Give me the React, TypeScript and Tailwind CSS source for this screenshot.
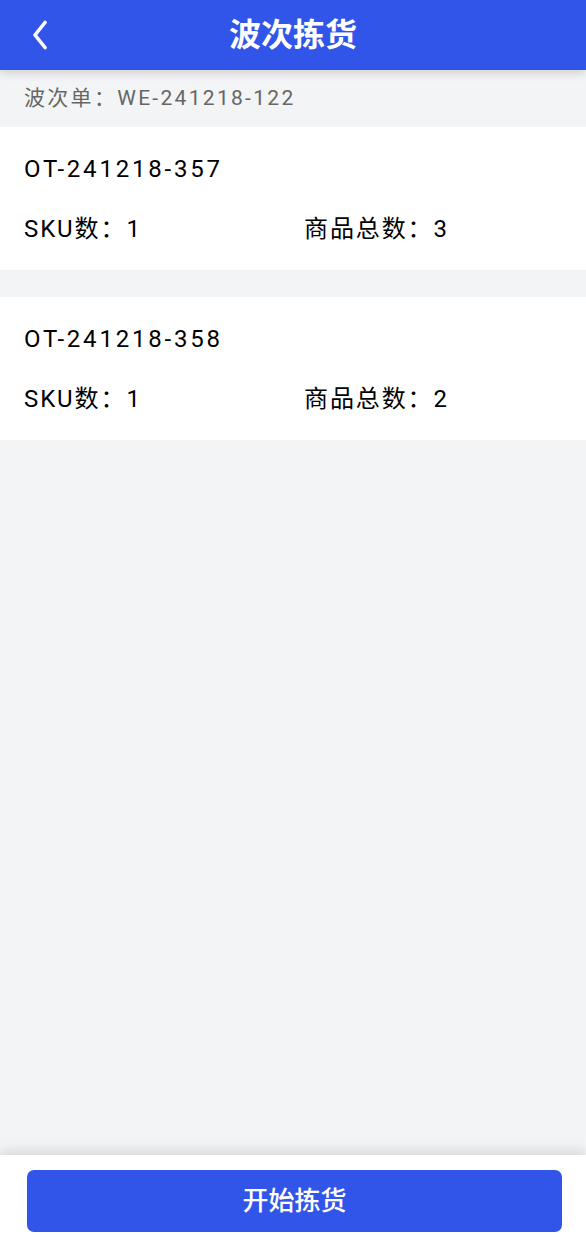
const orders = [
  { no: 'OT-241218-357', sku: 1, total: 3 },
  { no: 'OT-241218-358', sku: 1, total: 2 },
]

export default function App() {
  return (
    <div
      className="relative flex h-[1245px] w-[586px] flex-col overflow-hidden bg-[#f3f4f6] text-black"
      style={{ fontFamily: 'Roboto, "Noto Sans CJK SC", sans-serif' }}
    >
      {/* 顶部导航 */}
      <header className="relative z-10 flex h-[70px] shrink-0 items-center justify-center bg-[#3255e9] shadow-[0_2px_10px_rgba(0,0,0,0.18)]">
        <button className="absolute left-[28px] top-[19px] flex h-[32px] w-[24px] items-center justify-center">
          <svg width="20" height="30" viewBox="0 0 20 30" fill="none">
            <path
              d="M15 2.5 L5 15 L15 27.5"
              stroke="white"
              strokeWidth="3.6"
              strokeLinecap="round"
              strokeLinejoin="round"
            />
          </svg>
        </button>
        <h1 className="text-[32px] font-bold leading-none text-white">波次拣货</h1>
      </header>

      <div className="flex h-[57px] shrink-0 items-center px-[24px] text-[21px] tracking-[2.3px] text-[#666]">
        波次单：WE-241218-122
      </div>

      <div className="flex flex-col gap-[27px]">
        {orders.map((o) => (
          <div key={o.no} className="flex h-[143px] flex-col bg-white px-[24px]">
            <div className="mt-[26px] text-[24px] leading-[32px] tracking-[2.8px]">{o.no}</div>
            <div className="mt-[28px] flex text-[24px] leading-[32px] tracking-[1.9px]">
              <div className="w-[280px]">SKU数：{o.sku}</div>
              <div>商品总数：{o.total}</div>
            </div>
          </div>
        ))}
      </div>

      <div className="flex-1" />

      {/* 底部按钮 */}
      <footer className="relative z-10 h-[90px] shrink-0 bg-white pl-[27px] pr-[24px] pt-[15px] shadow-[0_-4px_12px_rgba(0,0,0,0.12)]">
        <button className="flex h-[62px] w-full items-center justify-center rounded-[7px] bg-[#3255e9] text-[26px] font-medium text-white">
          开始拣货
        </button>
      </footer>
    </div>
  )
}
